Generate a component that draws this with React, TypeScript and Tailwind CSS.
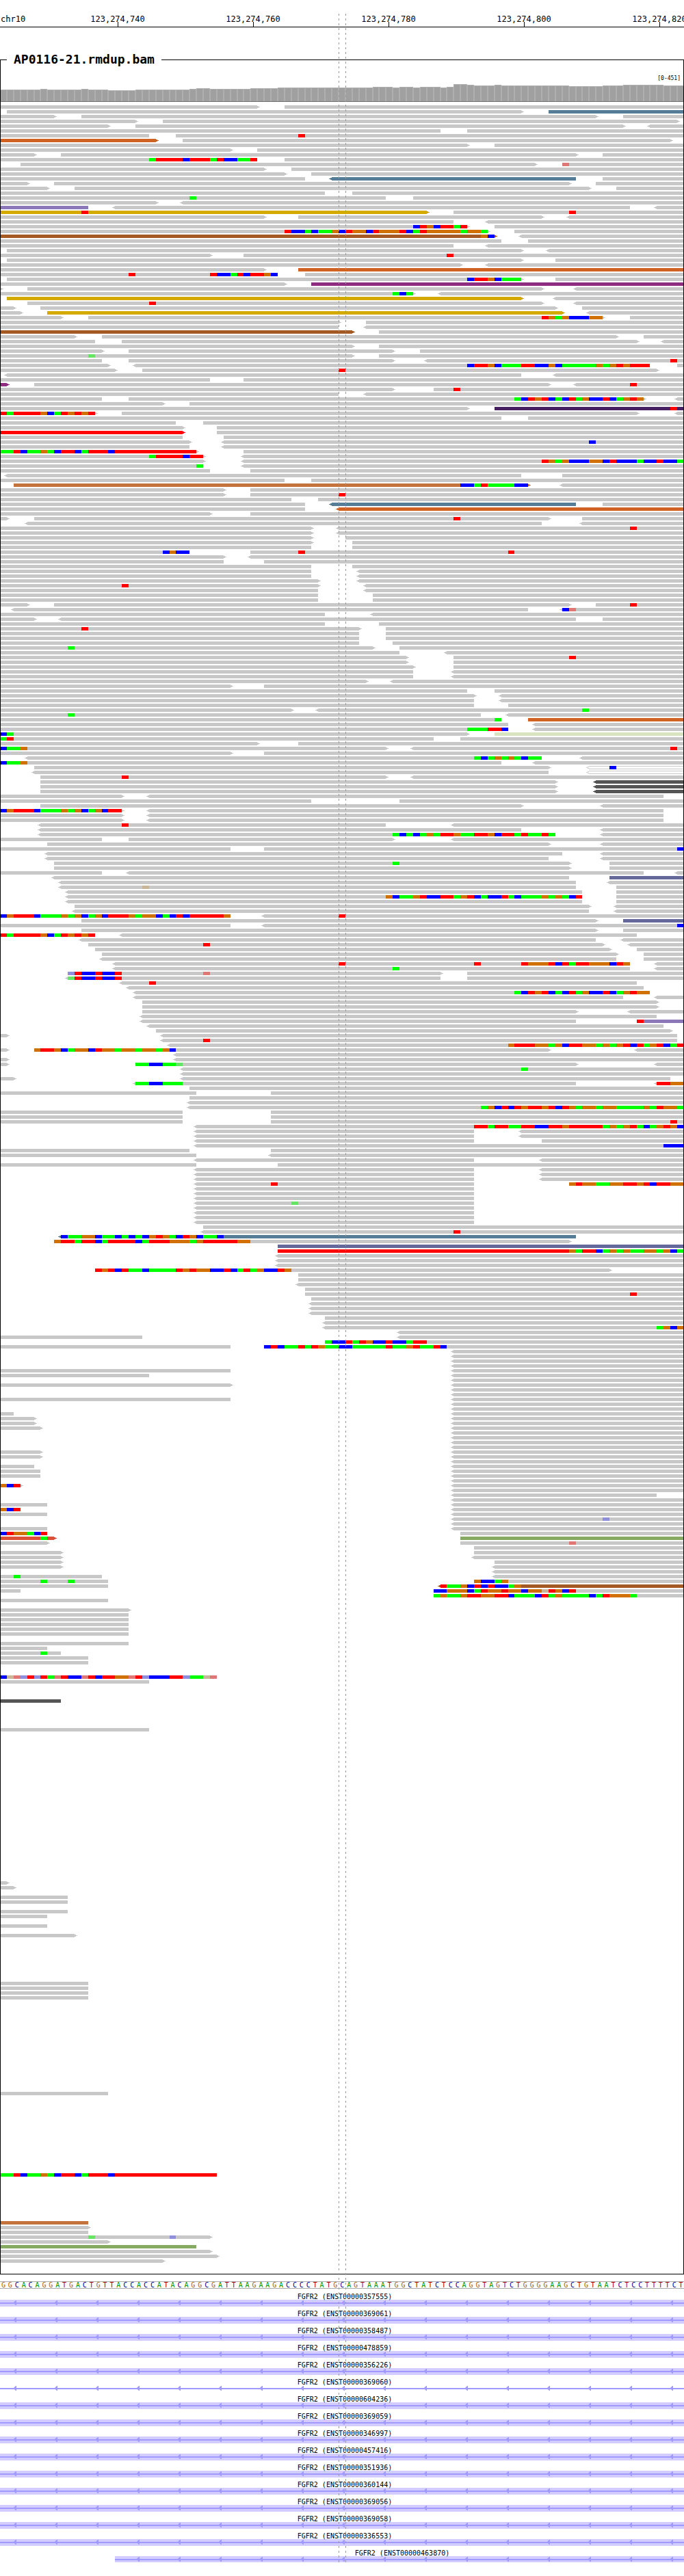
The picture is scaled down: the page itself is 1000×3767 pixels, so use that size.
import React from "react";

/* ---------- shared scale ---------- */

const COLUMNS = 101;
const VIEW_WIDTH = 1000;
const columnX = (c: number) =>
  Math.min(999, Math.max(1, Math.round((c * VIEW_WIDTH) / COLUMNS)));

/* ---------- data ---------- */

const TICKS = ["123,274,740", "123,274,760", "123,274,780", "123,274,800", "123,274,820"];

// Depth of coverage as [height, number of consecutive columns].
const COVERAGE: [number, number][] = [
  [17, 6], [18, 1], [17, 5], [18, 1], [17, 3], [16, 4], [17, 8], [18, 1], [19, 2],
  [18, 6], [19, 4], [20, 14], [21, 3], [20, 1], [21, 2], [20, 1], [21, 3], [20, 1],
  [21, 1], [25, 2], [24, 1], [23, 3], [24, 1], [23, 10], [22, 5], [23, 3], [24, 6], [23, 3],
];

/*
 * One line per pileup row. "a-b" is a read over columns a to b, "<" and ">" give
 * its direction, ":name" its colour, "@n" starts a run of mismatched bases at
 * column n (lower case: low quality), "xN" repeats the row and "N|" jumps to row N.
 */
const READS = `
0-38> 42-101
1-77> 81-101:steel
0-8> 12-88> 92-101
0-20> 24-100>
0-16> 20-92> <96-101
0-65 69-101
0-22 26-101 @44T
0-23>:orange 27-99>
0-69> 73-101
0-34> 38-101
0-5> 9-85> 89-101
0-38 42-101 @22ATTTTCTTTATCCAAT
3-79> 83-101 @83t
0-39> 43-101
0-42> 46-101
0-45 <49-85:steel 89-101
0-4> 8-84> 88-101
0-7> 11-87> 91-101
0-48 52-101
0-57 61-101 @28A
0-23> <27-101
0-13:purple <17-93 <97-101
0-63>:gold 67-101 @12T @84T
0-39> 44-80> <84-101
0-67 <72-101
0-69> 73-101 @61CTGCTTAT
0-72> 76-101 @42TCCACAAGCTGGCTGGGTCATGGGGGAGGA
0-73>:brown <77-101 @71GC
0-74 78-101
0-67 <72-101
1-77> <81-101
0-31> 36-101 @66T
1-77> 82-101
0-68> <72-101
0-39> 44-101:orange
0-41 45-101 @19T @31TCCATCTTGC
1-77> 82-101 @69CTTGCAAA
0-42> 46-101:magenta
0-0> 4-80> <85-101
0-61> <65-101 @58ACA
1-77>:gold <82-101
4-80> <85-101 @22T
0-2> 6-82> 86-101
0-3> 7-83>:gold <87-101
0-9> 13-89> 93-101 @80TGAGCCCGG
0-50> 54-101
0-50 <54-101
0-52>:brown 56-101
0-11> 15-91> 95-101
0-14 18-94> <98-101
0-52> 56-101
0-15> 19-58> 62-101
0-52> 56-101 @13a
0-15 19-58> <63-101 @99T
0-16> <20-96 100-101 @69CTTGCAAATTCCGCAAAAAGAGTGTTT
0-17> 21-97> @50T
<1-77 <82-101
0-31 36-101
0-1>:magenta 5-81> <85-101 @93T
0-58> 64-101 @67T
0-50 <54-101
0-15 19-95> <100-101 @76ACTGTCACTAGCCTCAGTG
0-24> 28-101
0-69> 73-101:indigo @99T
0-14> 18-94> <100-101 @0TATTTTGCATGTGT
0-74 78-101
0-26 30-101
0-27> 32-101
0-27>:red 32-101
0-27 33-101
0-28> <33-101 @87C
0-28 <33-101
0-29> 36-101 @0AATCAAGACTTCATTTCTTTTTTTTTTTT
0-30> <36-101 @22ATTTTCTT
0-30> <36-101 @80TGAGCCCGGCTCCCACCTCCA
0-30 <36-101 @29A
0-31 37-101
<1-77 83-101
0-42 46-101
2-78>:copper <83-101 @68CCATAAAACC
0-33> 37-101
0-33> 37-101 @50T
0-43 47-101
0-45 <49-85:steel 89-101
0-45 <50-101:orange
0-31> 37-101
0-1> 5-81> 86-101 @67T
<4-80 <86-101
0-46> <50-101 @93T
0-46> <50-101
0-46> 51-101
0-46> 52-101
0-46 52-101
0-28 37-101 @24CGCC @44T @75T
0-33> <37-101
0-33 39-101
0-46 52-101
0-46 <53-101 x2
0-47> <53-101
0-47> <54-101 @18T
0-47 <54-101
0-47 55-101 x2
0-4> 8-84> 88-101 @93T
<2-78 <83-101 @83Ct
0-48 <55-101
0-5> <9-85 89-101
0-48 56-101
0-53> 57-101 @12T
0-53 57-101 x2
0-53 58-101
0-55> 59-101 @10A
0-59 <66-101
0-60> 67-101 @84T
0-60> 67-101
0-61> 67-101
0-61 <67-101 x2
0-54> <58-101
0-34> 39-101
0-69 73-101
0-70> <74-101
0-70 <74-101
0-70 75-101
0-43> <47-101 @86A
0-71 <75-101 @10A
0-74 78-101:orange @73A
0-75 <79-101
0-75 <79-101 @69AAATTC
0-69> 73-101:pale @0CA
0-64 68-101 @0AT
0-38> 44-101
0-57> <61-101 @0CAAG @99T
0-34> 39-101
<4-80 <86-101 @70ACAGAGACAA
0-74 <79-101 @0CAAG
5-81> <87-101:hollow @90C
<5-81 <87-101:hollow
6-57> <61-101 @18T
6-82> <88-101:dark x3
0-18> <22-98
0-46 59-101
6-77> <89-101
0-18> <22-98 @0CGTTTCAAAGAGCAGCTT
0-18> <22-98 x2
<6-57 <67-101 @18T
<6-77 <89-101
<6-82 <89-101 @58ACACAGATTGAATTGCTTATAATA
0-15 19-58> <67-101
7-81> <89-101
0-34 39-101 @100C
<7-83 <89-101
<7-81 <89-101
8-84> 90-101 @58A
8-84> 90-101
0-15 <19-95 <100-101
<8-84 90-101:slate
<9-85 <90-101
<9-85 91-101 @21g
<10-86 91-101
<10-86 91-101 @57GCAAGTCCTTAGTCACCTACAAAGAGACT
<10-86 91-101
11-87> <91-101
<11-87 <91-101
0-34 <39-101 @0CGTTTCAAAGAGCAGCTTTGAGGCACTCTTTTTG @50T
12-88> 92-101:slate
0-34 <39-101 @100C
12-88> 92-101
0-14 <18-94 @0TATTTTGCATGTGT
<12-88 <92-101
13-89> <93-101 @30T
14-90> 94-101
15-91> 95-101
<15-91 95-101
<17-93 <97-101 @50T @70T @77TGGGTCTATTGGGCTG
<17-93 <97-101 @58A
10-65> 69-101 @10cTCCTCCT @30t
<10-65 69-101 @10aTCCTCCT
<18-94 @22T
<19-95
<20-96 @76ACTGTCACTAGCCTCAGTGG
<20-92 <97-101
21-97> x2
21-85> <93-101
<21-97
<21-85 94-101:purple @94T
<22-98
23-99>
0-1> <24-100
<24-100 @30T
<25-101 @75GTTTGGAGCTTGGAGAGTCTAGTCAT
0-1> 5-81> <94-101 @5GTTGCAGGCTGGAGGAGGAGC
<26-101
0-1> <26-101
0-1> 20-85> <97-101 @20AACCAAa
<27-101 @77A
<27-101
0-2> <27-99
<20-85 <97-101 @20AACCAAA @97TTGG
28-101
0-29 40-101
28-101
<28-101
<28-101 @71AGCTCTGTTGTCTGAGGAGGAAAAGATGGA
0-27 40-101 x2
0-27 40-101 @99T
<29-101 @70TTATTAATTCCTTGTTTTTAGAGTACAGTGC
<29-70 <77-101 x2
<29-70 80-101
<29-101 @98CCC
0-28 40-101
0-29 <40-101
<29-70 <80-101
0-29 41-101
<29-70 <80-101 x3
<29-70 84-101 @40T @84GTGGAAGGTTGTCTTGG
<29-70 x3
<29-70 @43a
<29-70 x4
30-101
<30-101 @67T
<9-85:steel @9CAAGGCAACACACGTGACTGCAAC
8-84> @8GTTATTCATTTTCATTTGGGAGTTTTTGG
41-101:slate
41-101:red @84GATTCAGAGAAGGAGCA
<41-101 x3
14-90> @14TGTCTAACAAAATGTGGCCTCATAGCCTG
44-101 x2
<44-101
45-101
45-101 @93T
46-101
<46-101 x3
48-101
<48-101
<48-101 @97AGCG
<59-101
0-21 <59-101
48-101 @48ACCTATGCCTCCATT
0-34 39-101 @39CTCAATATGAACCAAAAATAAGTAATC
<67-101 x30
<67-97
<67-101 x4
<67-101 @89c
<67-101 x2
68-101
68-101:green
68-101 @84t
70-101 x2
<70-101
73-101
<73-101 x3
70-101 @70GCCAG
<65-101:brown @65TAAGCTCTCCAG
64-101 @64CCGGGCATGGTGGCGGgTGCT
64-101 @64AGAAGTTGGTTCAAACTAGAAAACATGGGA
264|0-34
265|0-22
267|0-34>
270|0-34
273|0-2
274|0-5> x2
276|0-6>
281|0-6> x2
284|0-5
285|0-6 x2
288|0-3> @0GCT
292|0-7
293|0-3 @0GCT
294|0-7
297|0-7
298|0-7 @0CTGGACT
299|0-8>:tomato @6A
300|0-7>
302|0-9> x4
307|0-15 @2A
308|0-16 @6A @10A
309|0-16
310|0-3
312|0-16
314|0-19>
315|0-19 x5
321|0-19
322|0-7
323|0-9 @6A
324|0-13 x2
328|0-32 @0CgtcTcTAtTCCtTCTTGGtTcCCCTTcAAgt
329|0-22
333|0-9:dark
339|0-22
371|0-1>
372|0-2>
374|0-10 x2
377|0-10
378|0-7
380|0-7
382|0-11>
392|0-13 x4
415|0-16
432|0-32 @0AATCAAGACTTCATTTCTTTTTTTTTTTTTTT
442|0-13:copper
443|0-13>
444|0-13
445|0-31> @13a @25c
446|0-16>
447|0-29:green
448|0-31>
449|0-32>
450|0-24>
`;

const SEQUENCE =
  "GGCACAGGATGACTGTTACCACCATACAGGCGATTAAGAAGACCCCTATGCAGTAAATGGCTATCTCCAGGTAGTCTGGGGAAGCTGTAATCTCCTTTTCT";

const GENES = [
  "357555", "369061", "358487", "478859", "356226", "369060", "604236", "369059",
  "346997", "457416", "351936", "360144", "369056", "369058", "336553", "463870",
];

/* ---------- colours ---------- */

const READ_FILL: Record<string, string> = {
  grey: "#c8c8c8",
  steel: "#567d98",
  orange: "#d06324",
  copper: "#c4733c",
  gold: "#d4aa00",
  purple: "#8c78b9",
  brown: "#a55a23",
  magenta: "#8e2d7f",
  indigo: "#472063",
  slate: "#64689a",
  green: "#87aa62",
  pale: "#d8e3c0",
  tomato: "#dc5038",
  red: "#ff0000",
  dark: "#555555",
  hollow: "#c8c8c8",
};

const BASE_FILL: Record<string, string> = {
  A: "#00ff00",
  C: "#0000ff",
  G: "#d17105",
  T: "#ff0000",
  a: "#64e664",
  c: "#8f8fdc",
  g: "#c9b598",
  t: "#e07777",
};

const LETTER_CLASS: Record<string, string> = {
  A: "text-[#009600]",
  C: "text-[#000096]",
  G: "text-[#a86414]",
  T: "text-[#b40000]",
};

/* ---------- pileup ---------- */

type PileupRow = { index: number; tokens: string[] };

function parseReads(text: string): PileupRow[] {
  const rows: PileupRow[] = [];
  let index = 0;
  for (const line of text.trim().split("\n")) {
    let body = line;
    const jump = /^(\d+)\|/.exec(line);
    if (jump) {
      index = Number(jump[1]);
      body = line.slice(jump[0].length);
    }
    let tokens = body.split(" ");
    const last = tokens[tokens.length - 1];
    let repeat = 1;
    if (last.startsWith("x")) {
      repeat = Number(last.slice(1));
      tokens = tokens.slice(0, -1);
    }
    for (let i = 0; i < repeat; i++) rows.push({ index: index++, tokens });
  }
  return rows;
}

const ROWS = parseReads(READS);

function Read({ token, y }: { token: string; y: number }) {
  const m = /^(<?)(\d+)-(\d+)(>?)(?::(\w+))?$/.exec(token);
  if (!m) return null;
  const x1 = columnX(Number(m[2]));
  const x2 = columnX(Number(m[3]));
  const hollow = m[5] === "hollow";
  return (
    <g fill={READ_FILL[m[5] ?? "grey"]}>
      <rect x={x1} y={y} width={x2 - x1} height={5} />
      {m[1] && <path d={`M${x1} ${y + 1}h-2v1h-2v1h2v1h2z`} />}
      {m[4] && <path d={`M${x2} ${y + 1}h2v1h2v1h-2v1h-2z`} />}
      {hollow && <path d={`M${x1} ${y + 1}H${x2}v3H${x1}v-1h-2v-1h2z`} fill="#ffffff" />}
    </g>
  );
}

function Mismatches({ token, y }: { token: string; y: number }) {
  const m = /^@(\d+)(\w+)$/.exec(token);
  if (!m) return null;
  const start = Number(m[1]);
  return (
    <g>
      {m[2].split("").map((base, i) => {
        const x = columnX(start + i);
        return (
          <rect
            key={i}
            x={x}
            y={y}
            width={columnX(start + i + 1) - x}
            height={5}
            fill={BASE_FILL[base]}
          />
        );
      })}
    </g>
  );
}

function Pileup() {
  return (
    <svg
      className="mt-[5px] block h-[3171px] w-full"
      viewBox="1 0 998 3171"
      preserveAspectRatio="none"
      shapeRendering="crispEdges"
      role="img"
      aria-label="Aligned reads"
    >
      {ROWS.map((row, r) => (
        <g key={r}>
          {row.tokens.map((token, i) =>
            token.startsWith("@") ? (
              <Mismatches key={i} token={token} y={row.index * 7} />
            ) : (
              <Read key={i} token={token} y={row.index * 7} />
            ),
          )}
        </g>
      ))}
    </svg>
  );
}

function Coverage() {
  const heights = COVERAGE.flatMap(([h, n]) => Array<number>(n).fill(h));
  return (
    <svg
      className="block h-[26px] w-full"
      viewBox="1 0 998 26"
      preserveAspectRatio="none"
      shapeRendering="crispEdges"
      role="img"
      aria-label="Coverage"
    >
      {heights.map((h, i) => {
        const x = Math.round((i * VIEW_WIDTH) / COLUMNS);
        const w = Math.round(((i + 1) * VIEW_WIDTH) / COLUMNS) - x;
        return (
          <g key={i}>
            <rect x={x} y={25 - h} width={w} height={h} fill="#afafaf" />
            <rect x={x + 1} y={26 - h} width={w - 2} height={h - 1} fill="#a0a0a0" />
          </g>
        );
      })}
      <rect x={0} y={25} width={1000} height={1} fill="#707070" />
    </svg>
  );
}

/* ---------- other tracks ---------- */

function Ruler() {
  return (
    <header className="flex h-10 overflow-hidden border-b border-black pt-[21px] text-[12px] leading-[14px]">
      <div className="w-[7.3%] shrink-0 pl-px">chr10</div>
      {TICKS.map((t) => (
        <div key={t} className="flex w-[19.8%] shrink-0 flex-col items-center">
          <span>{t}</span>
          <span className="-mt-[3px] h-[7px] w-px bg-black" />
        </div>
      ))}
    </header>
  );
}

function Sequence() {
  return (
    <div className="mt-[10px] flex h-[11px] border-y border-[#aaaaaa] text-[10px] leading-[9px]">
      {SEQUENCE.split("").map((b, i) => (
        <span key={i} className={`flex-1 basis-0 text-center ${LETTER_CLASS[b]}`}>
          {b}
        </span>
      ))}
    </div>
  );
}

function Gene({ id }: { id: string }) {
  const partial = id === "463870";
  const intron = id === "369060";
  const start = partial ? 168 : 0;
  const arrows = Array.from({ length: 17 }, (_, i) => 24 + i * 60).filter((x) => x > start + 20);
  return (
    <li className={partial ? "ml-[16.8%]" : ""}>
      <div className="h-[15px] pt-[5px] pl-2 text-center text-[10px] leading-[12px]">
        FGFR2 (ENST00000{id})
      </div>
      <svg
        className={`block w-full ${partial ? "h-[9px]" : "h-[10px]"} ${intron ? "" : "bg-[#d2ccff]"}`}
        viewBox={`${start} 0 ${VIEW_WIDTH - start} ${partial ? 9 : 10}`}
        preserveAspectRatio="none"
        fill="#a099ff"
        aria-hidden="true"
      >
        <rect x={start} y={4} width={VIEW_WIDTH - start} height={2} />
        {arrows.map((x) => (
          <path key={x} d={`M${x} 1V8H${x - 1}L${x - 4} 5V4L${x - 1} 1Z`} />
        ))}
      </svg>
    </li>
  );
}

const DASHES =
  "pointer-events-none absolute top-5 bottom-5 w-px bg-[repeating-linear-gradient(to_bottom,#999999_0px,#999999_3px,transparent_3px,transparent_7px)]";

export default function App() {
  return (
    <main className="relative w-full overflow-hidden bg-white pb-5 font-['DejaVu_Sans_Mono',monospace] text-black">
      <Ruler />

      <fieldset className="mt-[37px] border border-black">
        <legend className="ml-[9px] px-[10px] text-[18px] leading-[20px] font-bold">
          AP0116-21.rmdup.bam
        </legend>
        <div className="flex h-[52px] flex-col justify-between pt-[13px]">
          <div className="pr-1 text-right text-[8px] leading-[10px]">[0-451]</div>
          <Coverage />
        </div>
        <Pileup />
      </fieldset>

      <Sequence />

      <ul className="mt-px">
        {GENES.map((id) => (
          <Gene key={id} id={id} />
        ))}
      </ul>

      <div className={`${DASHES} left-[49.5%]`} />
      <div className={`${DASHES} left-[50.5%]`} />
    </main>
  );
}
